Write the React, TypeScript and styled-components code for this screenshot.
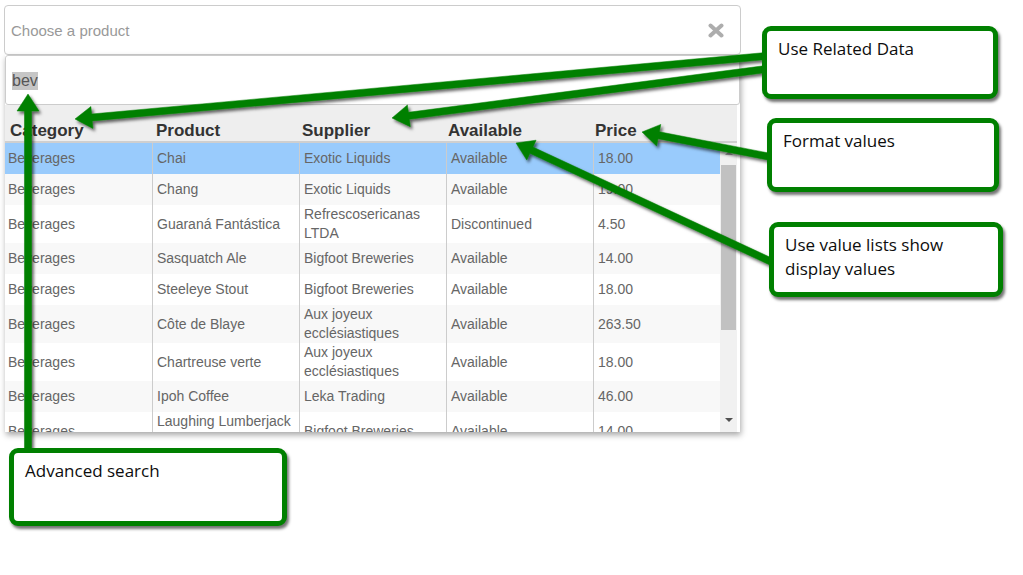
import React from "react";
import styled, { createGlobalStyle, css } from "styled-components";

const GlobalStyle = createGlobalStyle`
  html, body { margin: 0; padding: 0; background: #fff; }
  body { font-family: "Liberation Sans", Arial, sans-serif; }
  * { box-sizing: border-box; }
`;

const Page = styled.div`
  position: relative;
  width: 1023px;
  height: 575px;
  padding: 5px 0 0 4px;
  overflow: hidden;
`;

const Combo = styled.div`
  width: 737px;
  display: flex;
  flex-direction: column;
`;

const ComboInput = styled.div`
  height: 50px;
  border: 1px solid #ccc;
  border-radius: 4px;
  display: flex;
  align-items: center;
  justify-content: space-between;
  padding: 0 16px 0 6px;
`;

const Placeholder = styled.span`
  font-size: 15px;
  color: #999;
`;

const Dropdown = styled.div`
  margin-left: 1px;
  width: 735px;
  height: 377px;
  background: #fff;
  box-shadow: 1px 3px 6px rgba(0, 0, 0, 0.35);
  display: flex;
  flex-direction: column;
  overflow: hidden;
`;

const SearchBox = styled.div`
  height: 50px;
  border: 1px solid #ccc;
  border-radius: 3px;
  display: flex;
  align-items: center;
  padding: 2px 0 0 6px;
  font-size: 16px;
  color: #555;
  flex-shrink: 0;
`;

const Selected = styled.span`
  background: #c6c6c6;
  line-height: 18px;
`;

const COLS = "148px 147px 147px 147px 126px";
const HEAD_COLS = "146px 146px 146px 147px 147px";

const HeaderRow = styled.div`
  display: grid;
  grid-template-columns: ${HEAD_COLS};
  height: 38px;
  width: 732px;
  background: #eee;
  border-bottom: 2px solid #cfcfcf;
  flex-shrink: 0;
`;

const HeaderCell = styled.div`
  display: flex;
  align-items: flex-end;
  padding: 0 0 1px 5px;
  font-size: 17px;
  font-weight: bold;
  color: #333;
  line-height: 19px;
`;

const Body = styled.div`
  display: flex;
  flex: 1;
  min-height: 0;
`;

const Rows = styled.div`
  width: 715px;
  overflow: hidden;
  display: flex;
  flex-direction: column;
`;

const Row = styled.div<{ $selected?: boolean; $alt?: boolean }>`
  display: grid;
  grid-template-columns: ${COLS};
  min-height: 31px;
  flex-shrink: 0;
  background: ${(p) => (p.$selected ? "#99cbfc" : p.$alt ? "#f8f8f8" : "#fff")};
`;

const Cell = styled.div<{ $last?: boolean; $first?: boolean }>`
  display: flex;
  align-items: center;
  padding-left: ${(p) => (p.$first ? 3 : 4)}px;
  font-size: 14px;
  line-height: 19px;
  color: #666;
  ${(p) =>
    !p.$last &&
    css`
      border-right: 1px solid #ccc;
    `}
`;

const Scrollbar = styled.div`
  width: 17px;
  background: #f1f1f1;
  display: flex;
  flex-direction: column;
  align-items: center;
  padding-top: 22px;
  position: relative;
`;

const Thumb = styled.div`
  width: 15px;
  height: 165px;
  background: #c1c1c1;
`;

const ArrowBtn = styled.div<{ $dir: "up" | "down" }>`
  position: absolute;
  left: 5px;
  width: 0;
  height: 0;
  border-left: 4px solid transparent;
  border-right: 4px solid transparent;
  ${(p) =>
    p.$dir === "down"
      ? css`
          bottom: 10px;
          border-top: 4px solid #505050;
        `
      : css`
          top: 8px;
          border-bottom: 4px solid #a3a3a3;
        `}
`;

const Overlay = styled.svg`
  position: absolute;
  left: 0;
  top: 0;
  pointer-events: none;
`;

const Callout = styled.div<{ $x: number; $y: number; $w: number; $h: number }>`
  position: absolute;
  left: ${(p) => p.$x}px;
  top: ${(p) => p.$y}px;
  width: ${(p) => p.$w}px;
  height: ${(p) => p.$h}px;
  border: 5px solid #008000;
  border-radius: 9px;
  background: #fff;
  box-shadow: 2px 3px 3px rgba(0, 0, 0, 0.55);
  padding: 6px 10px 0 11px;
  font-family: "Open Sans", "Noto Sans", sans-serif;
  font-size: 17px;
  line-height: 24px;
  color: #0d0d0d;
`;

type RowData = [string, string, string, string, string];

const rows: RowData[] = [
  ["Beverages", "Chai", "Exotic Liquids", "Available", "18.00"],
  ["Beverages", "Chang", "Exotic Liquids", "Available", "19.00"],
  ["Beverages", "Guaraná Fantástica", "Refrescosericanas LTDA", "Discontinued", "4.50"],
  ["Beverages", "Sasquatch Ale", "Bigfoot Breweries", "Available", "14.00"],
  ["Beverages", "Steeleye Stout", "Bigfoot Breweries", "Available", "18.00"],
  ["Beverages", "Côte de Blaye", "Aux joyeux ecclésiastiques", "Available", "263.50"],
  ["Beverages", "Chartreuse verte", "Aux joyeux ecclésiastiques", "Available", "18.00"],
  ["Beverages", "Ipoh Coffee", "Leka Trading", "Available", "46.00"],
  ["Beverages", "Laughing Lumberjack Lager", "Bigfoot Breweries", "Available", "14.00"],
];

const headers = ["Category", "Product", "Supplier", "Available", "Price"];

function arrowPoints(x1: number, y1: number, x2: number, y2: number, w = 7, hw = 22, hl = 17) {
  const dx = x2 - x1;
  const dy = y2 - y1;
  const len = Math.hypot(dx, dy);
  const ux = dx / len;
  const uy = dy / len;
  const nx = -uy;
  const ny = ux;
  const bx = x2 - ux * hl;
  const by = y2 - uy * hl;
  const pts = [
    [x1 + (nx * w) / 2, y1 + (ny * w) / 2],
    [bx + (nx * w) / 2, by + (ny * w) / 2],
    [bx + (nx * hw) / 2, by + (ny * hw) / 2],
    [x2, y2],
    [bx - (nx * hw) / 2, by - (ny * hw) / 2],
    [bx - (nx * w) / 2, by - (ny * w) / 2],
    [x1 - (nx * w) / 2, y1 - (ny * w) / 2],
  ];
  return pts.map((p) => p.map((v) => v.toFixed(1)).join(",")).join(" ");
}

const arrows: [number, number, number, number][] = [
  [766, 56, 75, 119],
  [766, 69, 392, 118],
  [771, 157, 642, 132],
  [774, 263, 516, 143],
  [28, 452, 28, 94],
];

const ClearIcon = () => (
  <svg width="16" height="15" viewBox="0 0 16 15">
    <path d="M2.5 2.5 L13.5 12.5 M13.5 2.5 L2.5 12.5" stroke="#adadad" strokeWidth="4" strokeLinecap="round" />
  </svg>
);

export default function App() {
  return (
    <>
      <GlobalStyle />
      <Page>
        <Combo>
          <ComboInput>
            <Placeholder>Choose a product</Placeholder>
            <ClearIcon />
          </ComboInput>
          <Dropdown>
            <SearchBox>
              <Selected>bev</Selected>
            </SearchBox>
            <HeaderRow>
              {headers.map((h) => (
                <HeaderCell key={h}>{h}</HeaderCell>
              ))}
            </HeaderRow>
            <Body>
              <Rows>
                {rows.map((r, i) => (
                  <Row key={i} $selected={i === 0} $alt={i % 2 === 1}>
                    {r.map((c, j) => (
                      <Cell key={j} $first={j === 0} $last={j === 4}>
                        {c}
                      </Cell>
                    ))}
                  </Row>
                ))}
              </Rows>
              <Scrollbar>
                <ArrowBtn $dir="up" />
                <Thumb />
                <ArrowBtn $dir="down" />
              </Scrollbar>
            </Body>
          </Dropdown>
        </Combo>

        <Overlay width="1023" height="575" viewBox="0 0 1023 575">
          <defs>
            <filter id="arrowShadow" x="-10%" y="-10%" width="130%" height="130%">
              <feDropShadow dx="2" dy="2.5" stdDeviation="1.5" floodColor="#000" floodOpacity="0.6" />
            </filter>
          </defs>
          <g filter="url(#arrowShadow)" fill="#008000">
            {arrows.map((a, i) => (
              <polygon key={i} points={arrowPoints(a[0], a[1], a[2], a[3])} strokeLinejoin="round" stroke="#008000" strokeWidth="0.5" />
            ))}
          </g>
        </Overlay>

        <Callout $x={762} $y={26} $w={236} $h={73}>Use Related Data</Callout>
        <Callout $x={767} $y={118} $w={232} $h={74}>Format values</Callout>
        <Callout $x={769} $y={222} $w={234} $h={75}>
          Use value lists show
          <br />
          display values
        </Callout>
        <Callout $x={9} $y={448} $w={278} $h={78}>Advanced search</Callout>
      </Page>
    </>
  );
}
